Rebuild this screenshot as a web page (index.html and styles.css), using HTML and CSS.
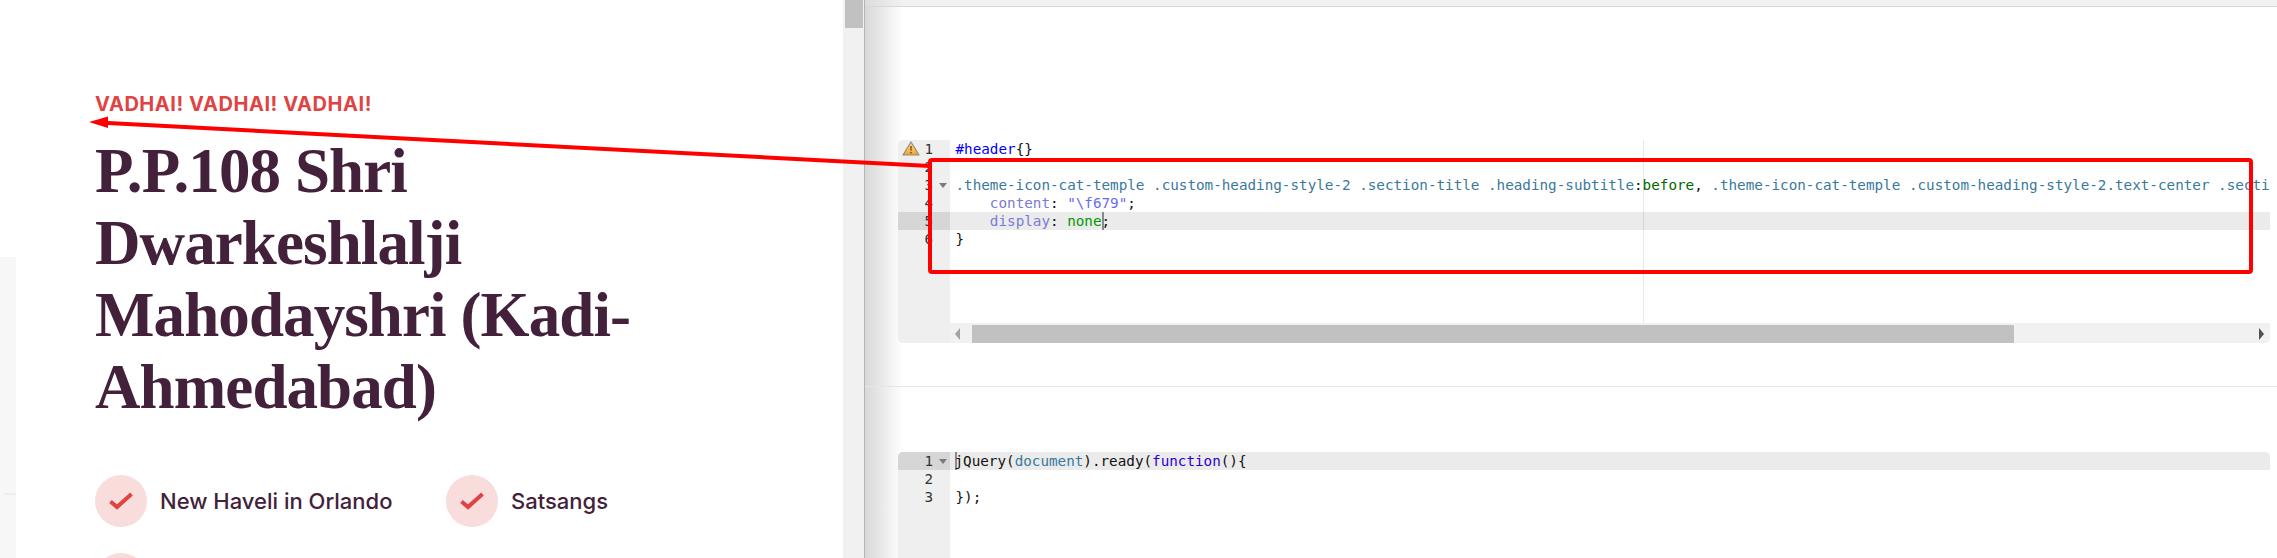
FILE: index.html
```html
<!DOCTYPE html>
<html lang="en">
<head>
<meta charset="utf-8">
<title>Vadhai</title>
<link rel="stylesheet" href="styles.css">
</head>
<body>
<div class="page">
  <section class="preview">
    <div class="preview-main">
      <div class="kicker">VADHAI! VADHAI! VADHAI!</div>
      <h1 class="title">P.P.108 Shri Dwarkeshlalji Mahodayshri (Kadi-Ahmedabad)</h1>
      <ul class="features">
        <li class="feature"><span class="tick"><svg viewBox="0 0 24 18" class="tick-icon"><path d="M1.5 9.5 L8 15 L22.5 2"/></svg></span><span>New Haveli in Orlando</span></li>
        <li class="feature"><span class="tick"><svg viewBox="0 0 24 18" class="tick-icon"><path d="M1.5 9.5 L8 15 L22.5 2"/></svg></span><span>Satsangs</span></li>
        <li class="feature"><span class="tick"><svg viewBox="0 0 24 18" class="tick-icon"><path d="M1.5 9.5 L8 15 L22.5 2"/></svg></span></li>
      </ul>
    </div>
    <div class="vscroll"><div class="vthumb"></div></div>
  </section>

  <section class="panel">
    <div class="panel-top"></div>
    <div class="css-area">
      <div class="editor editor-css">
        <div class="gutter">
          <div class="gl"><svg class="warn" viewBox="0 0 18 15"><defs><linearGradient id="wg" x1="0" y1="0" x2="0" y2="1"><stop offset="0" stop-color="#fde3a7"/><stop offset="1" stop-color="#f0a030"/></linearGradient></defs><path d="M9 1 L17 14 L1 14 Z" fill="url(#wg)" stroke="#9a8a70" stroke-width="1.2" stroke-linejoin="round"/><path d="M8.2 5 H9.8 L9.5 10 H8.5 Z M8.3 11 H9.7 V12.6 H8.3 Z" fill="#7a4a10"/></svg><span class="num">1</span></div>
          <div class="gl"><span class="num">2</span></div>
          <div class="gl"><span class="num">3</span><i class="fold"></i></div>
          <div class="gl"><span class="num">4</span></div>
          <div class="gl on"><span class="num">5</span></div>
          <div class="gl"><span class="num">6</span></div>
        </div>
        <div class="code">
          <div class="cl"><span class="id">#header</span><span class="p">{}</span></div>
          <div class="cl"></div>
          <div class="cl"><span class="sel">.theme-icon-cat-temple .custom-heading-style-2 .section-title .heading-subtitle</span><span class="p">:</span><span class="pseudo">before</span><span class="p">,</span> <span class="sel">.theme-icon-cat-temple .custom-heading-style-2.text-center .secti</span></div>
          <div class="cl">    <span class="prop">content</span><span class="p">:</span> <span class="str">"\f679"</span><span class="p">;</span></div>
          <div class="cl on">    <span class="prop">display</span><span class="p">:</span> <span class="val">none</span><span class="caret"></span><span class="p">;</span></div>
          <div class="cl"><span class="p">}</span></div>
          <i class="margin-line"></i>
        </div>
        <div class="hscroll">
          <i class="arrow-l"></i>
          <div class="hthumb"></div>
          <i class="arrow-r"></i>
        </div>
      </div>
    </div>
    <div class="js-area">
      <div class="editor editor-js">
        <div class="gutter">
          <div class="gl on"><span class="num">1</span><i class="fold"></i></div>
          <div class="gl"><span class="num">2</span></div>
          <div class="gl"><span class="num">3</span></div>
        </div>
        <div class="code">
          <div class="cl on"><span class="caret caret-start"></span><span class="p">jQuery(</span><span class="sel">document</span><span class="p">).ready(</span><span class="kw">function</span><span class="p">(){</span></div>
          <div class="cl"></div>
          <div class="cl"><span class="p">});</span></div>
        </div>
      </div>
    </div>
  </section>

  <svg class="annotation" width="2277" height="558" viewBox="0 0 2277 558">
    <rect x="930" y="160" width="1321" height="112" rx="2" fill="none" stroke="#ff0000" stroke-width="4"/>
    <path d="M108 123 L930 166" stroke="#ff0000" stroke-width="4" fill="none"/>
    <path d="M89 122 L108 116.5 L108 128 Z" fill="#ff0000"/>
  </svg>
</div>
</body>
</html>
```
FILE: styles.css
```css
* { box-sizing: border-box; }
html, body { margin: 0; padding: 0; height: 100%; overflow: hidden; background: #fff; }
.page { position: relative; display: flex; width: 2277px; height: 558px; overflow: hidden; }

/* left preview */
.preview {
  display: flex;
  width: 865px;
  height: 558px;
  flex: none;
  border-right: 1px solid #b4b4b4;
  background:
    linear-gradient(#ededed, #ededed) 4px 493px / 12px 2px no-repeat,
    linear-gradient(#f7f7f7, #f7f7f7) 0 257px / 16px 100% no-repeat,
    #fff;
}
.preview-main { flex: 1; padding: 92px 0 0 95px; min-width: 0; }
.kicker {
  font: 700 20px/24px Inter, "Liberation Sans", sans-serif;
  color: #e04343;
  letter-spacing: 0.55px;
}
.title {
  margin: 19px 0 0;
  width: 560px;
  font: 700 63px/72px "Liberation Serif", serif;
  letter-spacing: -0.9px;
  color: #43213b;
}
.features {
  list-style: none;
  margin: 52px 0 0;
  padding: 0;
  display: grid;
  grid-template-columns: 351px 351px;
  grid-auto-rows: 52px;
  row-gap: 26px;
}
.feature {
  display: flex;
  align-items: center;
  gap: 13px;
  font: 500 22px/26px Inter, Roboto, sans-serif;
  color: #43213b;
}
.tick {
  width: 52px;
  height: 52px;
  flex: none;
  border-radius: 50%;
  background: #f9dcdc;
  display: flex;
  align-items: center;
  justify-content: center;
}
.tick-icon { width: 24px; height: 18px; fill: none; stroke: #e04343; stroke-width: 4px; }
.vscroll { width: 21px; flex: none; background: #f1f1f1; padding: 0 1px 0 2px; }
.vthumb { height: 28px; background: #c1c1c1; }

/* right panel */
.panel {
  flex: 1;
  min-width: 0;
  display: flex;
  flex-direction: column;
  background: linear-gradient(90deg, #d8d8d8 0, #fff 38px);
}
.panel-top { height: 7px; flex: none; background: linear-gradient(90deg, #dcdcdc, #f1f1f1 38px); border-bottom: 1px solid #d8d8d8; }
.css-area { height: 380px; flex: none; padding: 133px 0 0 33px; border-bottom: 1px solid #e6e6e6; }
.js-area { flex: 1; padding: 65px 0 0 33px; }

.editor {
  width: 1372px;
  display: grid;
  grid-template-columns: 52px 1fr;
  background: #fff;
  border-radius: 5px 5px 0 0;
  font: 14.27px/18px "DejaVu Sans Mono", "Liberation Mono", monospace;
  overflow: hidden;
}
.editor-css { grid-template-rows: 183px 20px; border-radius: 5px; background: #efefef; }
.editor-js { grid-template-rows: 106px; }
.gutter { background: #efefef; grid-row: 1 / span 2; color: #333; }
.gl { position: relative; height: 18px; padding-right: 17px; text-align: right; }
.gl.on { background: #d6d6d6; }
.code { position: relative; background: #fff; overflow: hidden; padding: 0; }
.cl { height: 18px; padding-left: 5.5px; white-space: pre; color: #111; }
.cl.on { background: #ebebeb; }
.warn { position: absolute; left: 4px; top: 1px; width: 18px; height: 15px; }
.fold {
  position: absolute;
  left: 41px;
  top: 7px;
  width: 0;
  height: 0;
  border: 4px solid transparent;
  border-top: 5px solid #7a7a7a;
  border-bottom: 0;
}
.id { color: #0000ff; }
.sel { color: #39799b; }
.pseudo { color: #006600; }
.prop { color: #7a7ad8; }
.str { color: #6a6aee; }
.val { color: #009900; }
.kw { color: #2a00d8; }
.p { color: #111; }
.caret { display: inline-block; width: 2px; height: 18px; margin-right: -2px; vertical-align: top; background: #8a8a8a; }
.caret-start { margin-left: -1px; }
.margin-line { position: absolute; left: 693px; top: 0; bottom: 0; width: 1px; background: rgba(0,0,0,.09); }

.hscroll { position: relative; display: flex; background: #f1f1f1; padding: 2px 0 0 22px; }
.hthumb { width: 1042px; height: 18px; background: #c1c1c1; }
.arrow-l, .arrow-r { position: absolute; top: 5px; width: 0; height: 0; border: 6px solid transparent; }
.arrow-l { left: 5px; border-right: 5px solid #a3a3a3; border-left: 0; }
.arrow-r { right: 6px; border-left: 5px solid #505050; border-right: 0; }

.annotation { position: absolute; left: 0; top: 0; pointer-events: none; }
```
